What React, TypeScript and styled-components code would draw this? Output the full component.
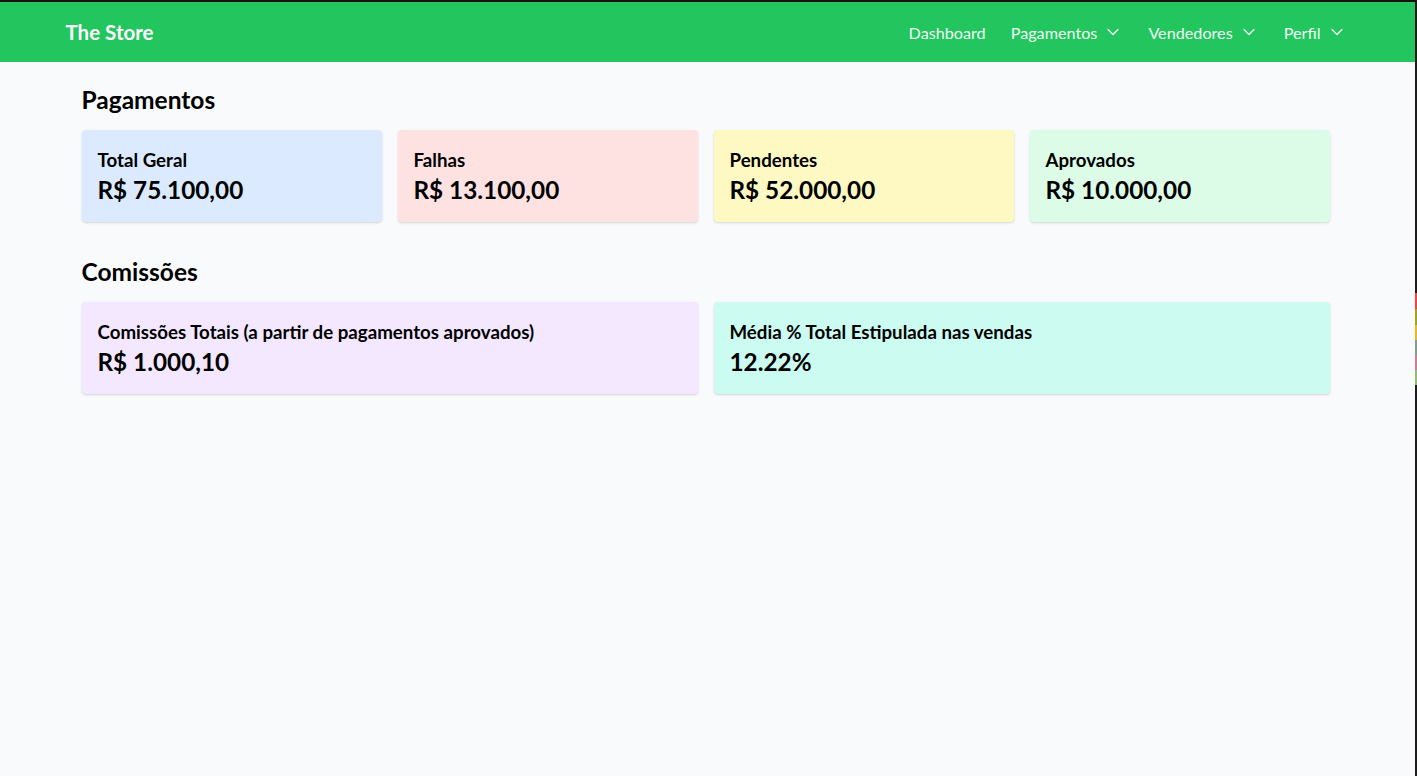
import React from "react";
import styled, { createGlobalStyle } from "styled-components";
import { ChevronDown } from "lucide-react";

const GlobalStyle = createGlobalStyle`
  * { box-sizing: border-box; }
  html, body { margin: 0; padding: 0; }
  body {
    background: #f9fafb;
    font-family: "Lato", "Noto Sans", sans-serif;
    color: #000;
  }
`;

const Frame = styled.div`
  min-height: 100vh;
  border-top: 2px solid #111;
  border-right: 2px solid #1c1c1c;
  background: #f9fafb;
  position: relative;
`;

const Marker = styled.div`
  position: absolute;
  right: -2px;
  width: 2px;
`;

const NavBar = styled.nav`
  background: #22c55e;
  height: 60px;
`;

const NavInner = styled.div`
  max-width: 1280px;
  height: 100%;
  margin: 0 auto;
  display: flex;
  align-items: center;
  justify-content: space-between;
  transform: translateX(-1px);
`;

const Brand = styled.div`
  color: #fff;
  font-size: 20.5px;
  font-weight: 700;
  margin-left: -1px;
`;

const NavLinks = styled.div`
  display: flex;
  align-items: center;
  gap: 25px;
`;

const NavLink = styled.div`
  display: flex;
  align-items: center;
  color: #f0fdf4;
  font-size: 16.2px;
  gap: 6px;
`;

const Main = styled.main`
  max-width: 1280px;
  margin: 0 auto;
  padding: 24px 16px;
  transform: translateX(-2px);
`;

const Section = styled.section`
  margin-bottom: 36px;
`;

const Heading = styled.h2`
  margin: 0 0 16px;
  font-size: 24.5px;
  line-height: 28px;
  font-weight: 700;
`;

const Grid = styled.div<{ $cols: number }>`
  display: grid;
  grid-template-columns: repeat(${(p) => p.$cols}, 1fr);
  gap: 16px;
`;

const Card = styled.div<{ $bg: string }>`
  background: ${(p) => p.$bg};
  border-radius: 4px;
  padding: 16px;
  box-shadow: 0 1px 3px rgba(0, 0, 0, 0.1), 0 1px 2px rgba(0, 0, 0, 0.06);
`;

const Label = styled.div`
  font-size: 18.7px;
  line-height: 28px;
  font-weight: 700;
`;

const Value = styled.div`
  font-size: 24.3px;
  line-height: 32px;
  font-weight: 700;
`;

const pagamentos = [
  { label: "Total Geral", value: "R$ 75.100,00", bg: "#dbeafe" },
  { label: "Falhas", value: "R$ 13.100,00", bg: "#fee2e2" },
  { label: "Pendentes", value: "R$ 52.000,00", bg: "#fef9c3" },
  { label: "Aprovados", value: "R$ 10.000,00", bg: "#dcfce7" },
];

const comissoes = [
  { label: "Comissões Totais (a partir de pagamentos aprovados)", value: "R$ 1.000,10", bg: "#f3e8ff" },
  { label: "Média % Total Estipulada nas vendas", value: "12.22%", bg: "#ccfbf1" },
];

const markers = [
  { top: 291, h: 16, c: "#ef4444" },
  { top: 307, h: 16, c: "#a3a31a" },
  { top: 323, h: 15, c: "#f0b429" },
  { top: 338, h: 15, c: "#7f9f8a" },
  { top: 353, h: 15, c: "#d07a95" },
  { top: 368, h: 15, c: "#8fbf6f" },
];

export default function App() {
  return (
    <>
      <GlobalStyle />
      <Frame>
        {markers.map((m) => (
          <Marker key={m.top} style={{ top: m.top, height: m.h, background: m.c }} />
        ))}
        <NavBar>
          <NavInner>
            <Brand>The Store</Brand>
            <NavLinks>
              <NavLink>Dashboard</NavLink>
              <NavLink>
                Pagamentos <ChevronDown size={20} strokeWidth={1.6} />
              </NavLink>
              <NavLink>
                Vendedores <ChevronDown size={20} strokeWidth={1.6} />
              </NavLink>
              <NavLink>
                Perfil <ChevronDown size={20} strokeWidth={1.6} />
              </NavLink>
            </NavLinks>
          </NavInner>
        </NavBar>
        <Main>
          <Section>
            <Heading>Pagamentos</Heading>
            <Grid $cols={4}>
              {pagamentos.map((c) => (
                <Card key={c.label} $bg={c.bg}>
                  <Label>{c.label}</Label>
                  <Value>{c.value}</Value>
                </Card>
              ))}
            </Grid>
          </Section>
          <Section>
            <Heading>Comissões</Heading>
            <Grid $cols={2}>
              {comissoes.map((c) => (
                <Card key={c.label} $bg={c.bg}>
                  <Label>{c.label}</Label>
                  <Value>{c.value}</Value>
                </Card>
              ))}
            </Grid>
          </Section>
        </Main>
      </Frame>
    </>
  );
}
